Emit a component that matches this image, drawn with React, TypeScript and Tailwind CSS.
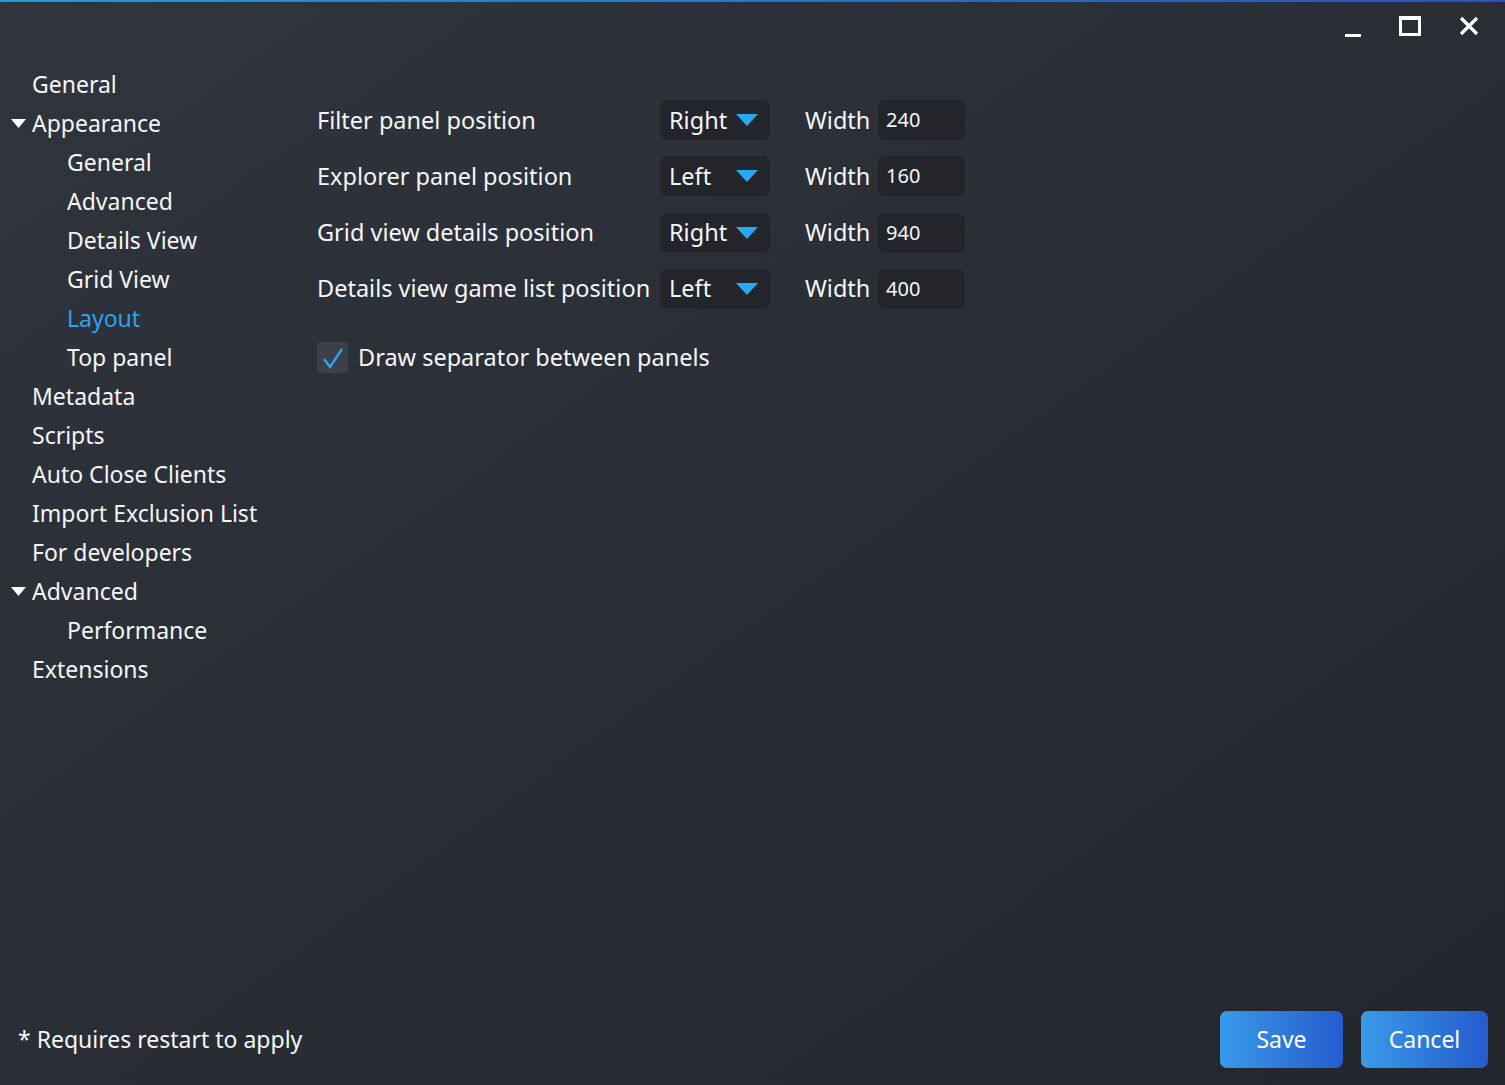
import { useState } from 'react';

type NavItem = { label: string; depth: number; expanded?: boolean; active?: boolean };

const NAV: NavItem[] = [
  { label: 'General', depth: 0 },
  { label: 'Appearance', depth: 0, expanded: true },
  { label: 'General', depth: 1 },
  { label: 'Advanced', depth: 1 },
  { label: 'Details View', depth: 1 },
  { label: 'Grid View', depth: 1 },
  { label: 'Layout', depth: 1, active: true },
  { label: 'Top panel', depth: 1 },
  { label: 'Metadata', depth: 0 },
  { label: 'Scripts', depth: 0 },
  { label: 'Auto Close Clients', depth: 0 },
  { label: 'Import Exclusion List', depth: 0 },
  { label: 'For developers', depth: 0 },
  { label: 'Advanced', depth: 0, expanded: true },
  { label: 'Performance', depth: 1 },
  { label: 'Extensions', depth: 0 },
];

const ROWS = [
  { label: 'Filter panel position', side: 'Right', width: '240' },
  { label: 'Explorer panel position', side: 'Left', width: '160' },
  { label: 'Grid view details position', side: 'Right', width: '940' },
  { label: 'Details view game list position', side: 'Left', width: '400' },
];

function Caret() {
  return (
    <svg width="22" height="12" viewBox="0 0 22 12">
      <path d="M0 0 H22 L11 12 Z" fill="#2aa8f2" />
    </svg>
  );
}

export default function App() {
  const [separator, setSeparator] = useState(true);

  return (
    <div
      className="relative flex h-[1085px] w-[1505px] flex-col overflow-hidden bg-gradient-to-br from-[#30343c] to-[#23262d] text-[#f4f6f8]"
      style={{ fontFamily: '"Noto Sans", "Open Sans", sans-serif' }}
    >
      <div className="h-[2px] w-full bg-gradient-to-r from-[#1a9dd0] to-[#2a4fc4]" />

      {/* window controls */}
      <div className="flex h-[48px] items-center justify-end gap-[38px] pr-[26px]">
        <div className="mt-[18px] h-[3px] w-[16px] bg-white" />
        <div className="h-[20px] w-[22px] border-[3px] border-t-[4px] border-white" />
        <svg width="20" height="20" viewBox="0 0 20 20">
          <path d="M2 2 L18 18 M18 2 L2 18" stroke="white" strokeWidth="3.2" />
        </svg>
      </div>

      <div className="flex flex-1">
        {/* sidebar */}
        <nav className="w-[300px] pt-[15px]">
          {NAV.map((item, i) => (
            <div
              key={i}
              className={`flex h-[39px] items-center text-[23px] ${item.active ? 'text-[#2aa5ee]' : ''}`}
              style={{ paddingLeft: item.depth === 0 ? 11 : 67 }}
            >
              {item.depth === 0 && (
                <span className="flex w-[21px] items-center">
                  {item.expanded && (
                    <svg width="15" height="9" viewBox="0 0 15 9">
                      <path d="M0 0 H15 L7.5 9 Z" fill="white" />
                    </svg>
                  )}
                </span>
              )}
              {item.label}
            </div>
          ))}
        </nav>

        {/* layout settings */}
        <div className="flex flex-col pl-[17px] pt-[42px]">
          {ROWS.map((row) => (
            <div key={row.label} className="flex h-[56.3px] items-center text-[23.5px]">
              <span className="w-[343px]">{row.label}</span>
              <div className="flex h-[40px] w-[110px] items-center justify-between rounded-[7px] bg-[#23252b] pl-[9px] pr-[12px]">
                <span>{row.side}</span>
                <Caret />
              </div>
              <span className="ml-[35px] w-[73px]">Width</span>
              <div className="flex h-[40px] w-[87px] items-center rounded-[7px] bg-[#23252b] pl-[8px] text-[20px]">
                {row.width}
              </div>
            </div>
          ))}

          <label className="mt-[23px] flex cursor-pointer items-center gap-[10px] text-[23.5px]">
            <button
              onClick={() => setSeparator((v) => !v)}
              className="flex h-[31px] w-[31px] items-center justify-center rounded-[4px] bg-[#3c4049]"
            >
              {separator && (
                <svg width="22" height="22" viewBox="0 0 22 22">
                  <path d="M2 12 L8 20 L20 2" fill="none" stroke="#2aa5ee" strokeWidth="2.4" />
                </svg>
              )}
            </button>
            Draw separator between panels
          </label>
        </div>
      </div>

      {/* footer */}
      <div className="flex items-center justify-between pb-[17px] pl-[18px] pr-[17px]">
        <span className="text-[23px]">* Requires restart to apply</span>
        <div className="flex gap-[18px]">
          <button className="h-[57px] w-[123px] rounded-[7px] bg-gradient-to-r from-[#3a9ae8] to-[#265bcd] text-[23px] text-white">
            Save
          </button>
          <button className="h-[57px] w-[127px] rounded-[7px] bg-gradient-to-r from-[#3a9ae8] to-[#265bcd] text-[23px] text-white">
            Cancel
          </button>
        </div>
      </div>
    </div>
  );
}
